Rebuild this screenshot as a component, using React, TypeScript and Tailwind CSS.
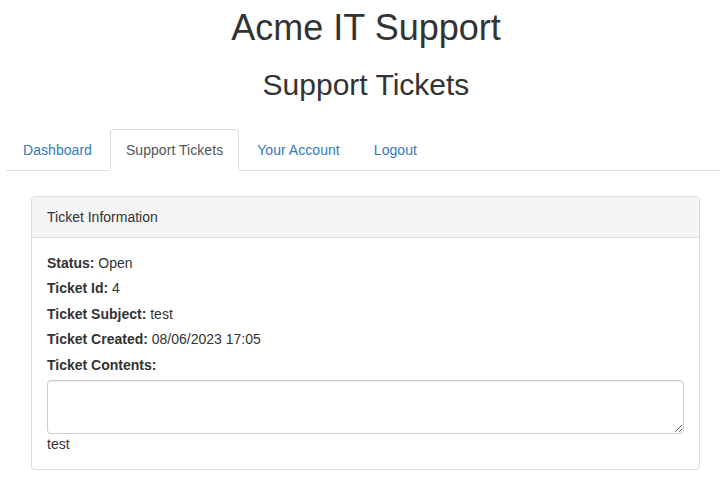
export default function App() {
  const tabs = ["Dashboard", "Support Tickets", "Your Account", "Logout"];
  const active = "Support Tickets";

  const rows: [string, string][] = [
    ["Status:", "Open"],
    ["Ticket Id:", "4"],
    ["Ticket Subject:", "test"],
    ["Ticket Created:", "08/06/2023 17:05"],
    ["Ticket Contents:", ""],
  ];

  return (
    <div className="w-full min-h-screen overflow-hidden bg-white text-[#333] text-[14px] leading-[20px] font-['Liberation_Sans',Arial,sans-serif]">
      <div className="w-[720px] ml-[6px] pt-[8px]">
        {/* Page titles */}
        <h1 className="text-center text-[36px] leading-[1.1] font-medium">Acme IT Support</h1>
        <h2 className="mt-[20px] text-center text-[30px] leading-[1.1] font-medium">Support Tickets</h2>

        {/* Tabs */}
        <ul className="mt-[28px] flex border-b border-[#ddd] pl-[1px]">
          {tabs.map((t) => (
            <li key={t} className="-mb-px">
              <a
                href="#"
                className={
                  t === active
                    ? "block mr-[2px] px-[15px] py-[10px] tracking-[0.05px] border border-[#ddd] border-b-transparent rounded-t-[4px] bg-white text-[#555]"
                    : "block mr-[2px] px-[15px] py-[10px] tracking-[0.05px] border border-transparent rounded-t-[4px] text-[#337ab7]"
                }
              >
                {t}
              </a>
            </li>
          ))}
        </ul>

        {/* Ticket panel */}
        <div className="mt-[25px] ml-[25px] w-[669px] border border-[#ddd] rounded-[4px] bg-white">
          <div className="px-[15px] py-[10px] bg-[#f5f5f5] border-b border-[#ddd] rounded-t-[3px]">
            Ticket Information
          </div>
          <div className="p-[15px]">
            {rows.map(([k, v]) => (
              <div key={k} className="h-[25.5px]">
                <label className="font-bold">{k}</label>
                {v && " " + v}
              </div>
            ))}
            <textarea
              rows={2}
              className="block w-full h-[54px] px-[12px] py-[6px] border border-[#ccc] rounded-[4px] shadow-[inset_0_1px_1px_rgba(0,0,0,0.075)] text-[#555] outline-none"
            />
            <div>test</div>
          </div>
        </div>
      </div>
    </div>
  );
}
